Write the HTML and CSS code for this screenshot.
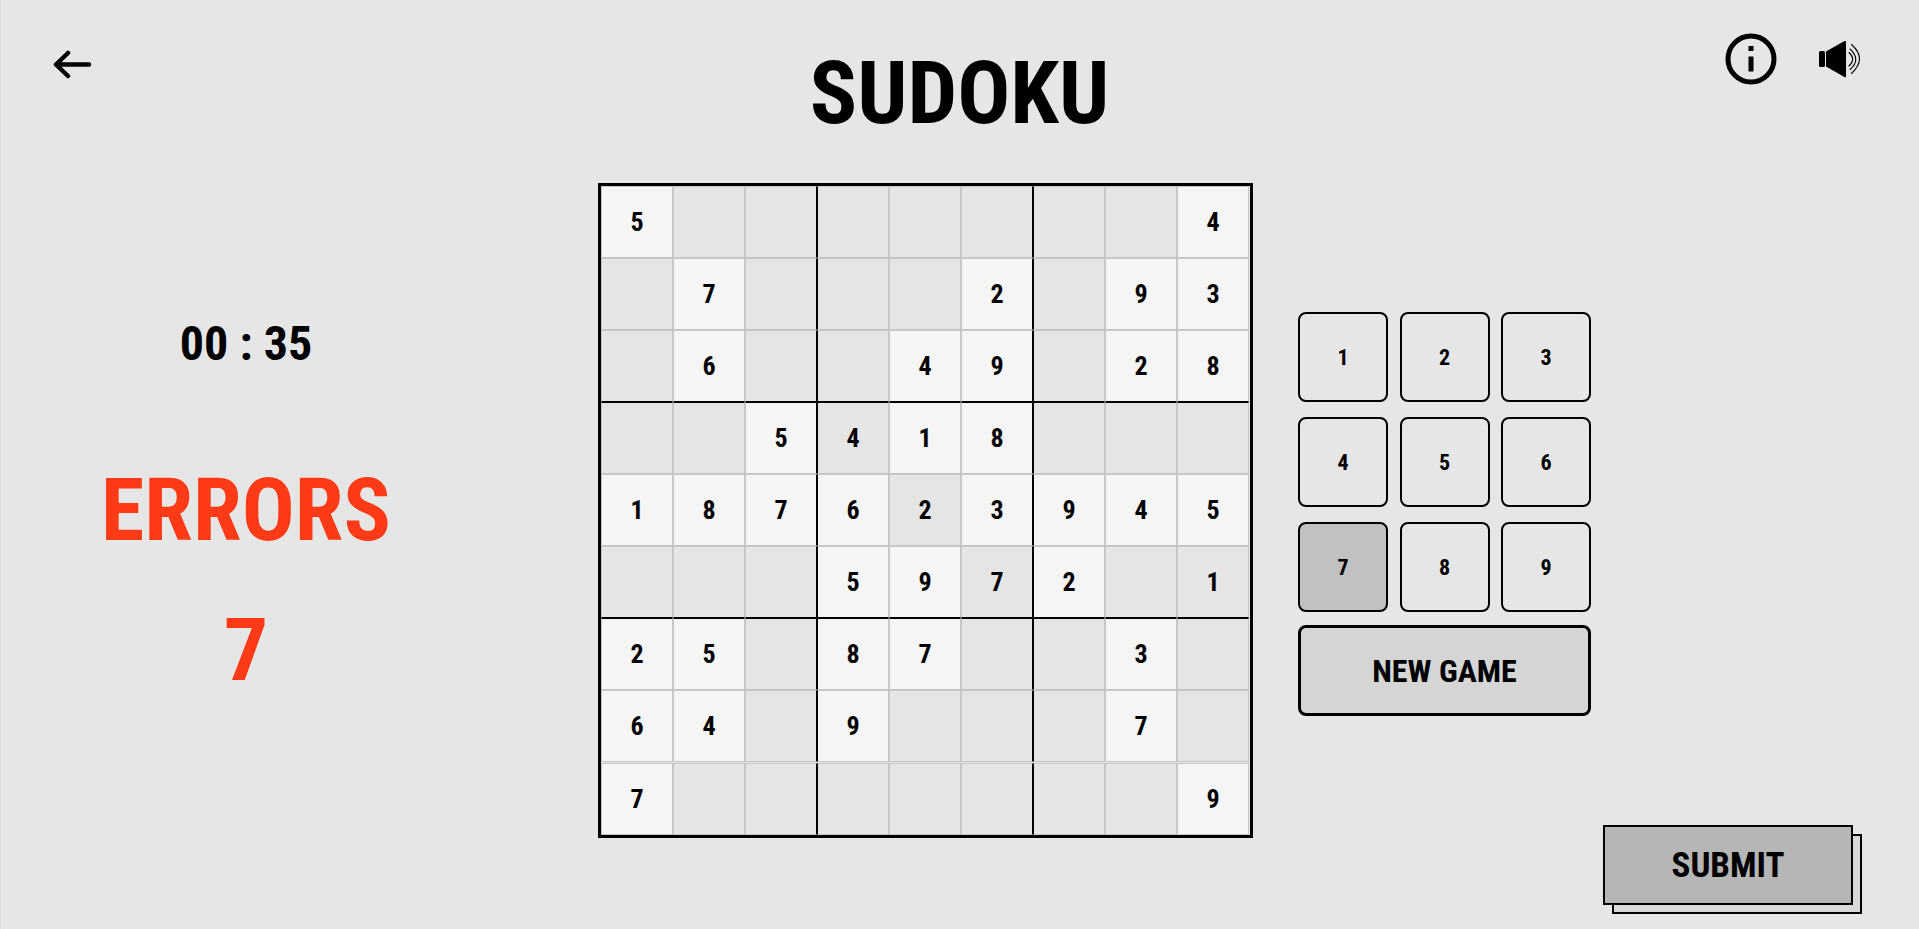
FILE: index.html
```html
<!DOCTYPE html>
<html lang="en">
<head>
<meta charset="utf-8">
<meta name="viewport" content="width=device-width, initial-scale=1">
<title>Sudoku</title>
<link rel="stylesheet" href="styles.css">
</head>
<body>
<div class="page">
  <header class="header">
    <a class="icon-link back" href="#" aria-label="Back">
      <svg width="40" height="30" viewBox="0 0 40 30" fill="none" stroke="#000" stroke-width="4" stroke-linecap="round" stroke-linejoin="round"><path stroke-width="4.500" d="M37 15.500H4M16 4L4 15.500L16 27"/><path d="M3.500 15.500L8 12V19Z" fill="#000" stroke-width="2"/></svg>
    </a>
    <h1 class="title">SUDOKU</h1>
    <div class="actions">
      <button class="icon-link" type="button" aria-label="Information">
        <svg width="52" height="52" viewBox="0 0 52 52"><circle cx="26" cy="26" r="23" fill="none" stroke="#000" stroke-width="5"/><path d="M23.500 13h5v5h-5zM23.500 23.500h5V38.500h-5z"/></svg>
      </button>
      <button class="icon-link" type="button" aria-label="Sound">
        <svg width="42" height="40" viewBox="0 0 42 40"><rect x="0" y="12" width="6" height="16" rx="1.500"/><path d="M7 12.500L25 2.300Q27 1.300 27 3V37Q27 39 25 37.700L7 27.500Z"/><g fill="none" stroke="#000" stroke-width="1.100" stroke-linecap="round"><path d="M30 13.500Q37.400 20 30 27"/><path d="M31 10Q42.500 20.500 31 30.500"/><path d="M32.500 5.500Q48.500 19.500 32.500 34.500"/></g></svg>
      </button>
    </div>
  </header>
  <main class="game">
    <section class="stats">
      <div class="timer">00 : 35</div>
      <h2 class="errors">ERRORS</h2>
      <div class="errors count">7</div>
    </section>
    <section class="board" id="board" aria-label="Board"></section>
    <section class="controls">
      <div class="keypad">
        <button class="key" type="button">1</button>
        <button class="key" type="button">2</button>
        <button class="key" type="button">3</button>
        <button class="key" type="button">4</button>
        <button class="key" type="button">5</button>
        <button class="key" type="button">6</button>
        <button class="key selected" type="button">7</button>
        <button class="key" type="button">8</button>
        <button class="key" type="button">9</button>
      </div>
      <button class="new-game" type="button">NEW GAME</button>
    </section>
    <button class="submit" type="button">SUBMIT</button>
  </main>
</div>
<script src="board.js"></script>
</body>
</html>
```

FILE: styles.css
```css
* { box-sizing: border-box; }

body {
  margin: 0;
  background: #e6e6e6;
  color: #000;
  font-family: "Roboto Condensed", "Liberation Sans Narrow", "Liberation Sans", sans-serif;
  font-weight: 700;
}

button {
  margin: 0;
  padding: 0;
  color: #000;
  font: inherit;
  cursor: pointer;
}

.page {
  display: flex;
  flex-direction: column;
  min-height: 100vh;
  box-shadow: inset 1px 0 #e0e0e0;
}

.header {
  display: grid;
  grid-template-columns: 1fr auto 1fr;
  align-items: start;
  height: 183px;
  padding: 33px 52px 0;
}

.icon-link {
  display: block;
  border: 0;
  background: none;
}

.icon-link svg { display: block; }

.back {
  justify-self: start;
  margin-top: 16px;
}

.title {
  margin: 0;
  padding-top: 10px;
  font-size: 88px;
  line-height: 100px;
}

.actions {
  display: flex;
  justify-content: flex-end;
  align-items: center;
  gap: 42px;
  padding-right: 6px;
}

.game {
  flex: 1;
  display: grid;
  grid-template-columns: 598fr auto auto 328fr;
  align-items: start;
}

.stats {
  padding: 129px 106px 0 0;
  text-align: center;
}

.timer {
  font-size: 48px;
  line-height: 64px;
}

.errors {
  margin: 84px 0 0;
  color: #ff3b17;
  font-size: 88px;
  line-height: 100px;
}

.count { margin-top: 40px; }

.board {
  display: grid;
  grid-template-columns: repeat(9, 72px);
  grid-template-rows: repeat(8, 72px) 73px;
  padding-right: 1px;
  border: 3px solid #000;
}

.cell {
  border: 1px solid #c6c6c6;
  background: #e5e5e5;
  font-size: 26px;
}

.cell.given { background: #f5f5f5; }
.cell.box-left { border-left-color: #000; }
.cell.box-right { border-right-color: #000; }
.cell.box-top { border-top-color: #000; }
.cell.box-bottom { border-bottom-color: #000; }
.cell.last-row { margin-top: 1px; }

.controls {
  width: 293px;
  margin: 129px 0 0 45px;
}

.keypad {
  display: grid;
  grid-template-columns: repeat(3, 90px);
  justify-content: space-between;
  row-gap: 15px;
}

.key {
  height: 90px;
  border: 2px solid #000;
  border-radius: 8px;
  background: #e6e6e6;
  font-size: 22px;
}

.key.selected { background: #c1c1c1; }

.new-game {
  width: 100%;
  height: 91px;
  margin-top: 13px;
  border: 3px solid #000;
  border-radius: 8px;
  background: #d5d5d5;
  font-size: 32px;
}

.submit {
  align-self: end;
  justify-self: end;
  width: 250px;
  height: 80px;
  margin: 0 66px 24px 0;
  border: 2px solid #000;
  background: #b6b6b6;
  box-shadow: 9px 9px 0 -2px #d9d9d9, 9px 9px 0 0 #000;
  font-size: 35px;
}
```

FILE: board.js
```js
const values = [
  "5.......4",
  ".7...2.93",
  ".6..49.28",
  "..5418...",
  "187623945",
  "...5972.1",
  "25.87..3.",
  "64.9...7.",
  "7.......9"
];
const entered = ["3-3", "4-4", "5-5", "5-8"];
const board = document.getElementById("board");

values.forEach((row, r) => {
  [...row].forEach((value, c) => {
    const cell = document.createElement("button");
    cell.type = "button";
    cell.className = "cell";
    cell.setAttribute("aria-label", `Row ${r + 1}, column ${c + 1}`);
    if (value !== ".") {
      cell.textContent = value;
      if (!entered.includes(`${r}-${c}`)) cell.classList.add("given");
    }
    if (c === 3 || c === 6) cell.classList.add("box-left");
    if (c === 2 || c === 5) cell.classList.add("box-right");
    if (r === 3 || r === 6) cell.classList.add("box-top");
    if (r === 2 || r === 5) cell.classList.add("box-bottom");
    if (r === 8) cell.classList.add("last-row");
    board.append(cell);
  });
});
```
